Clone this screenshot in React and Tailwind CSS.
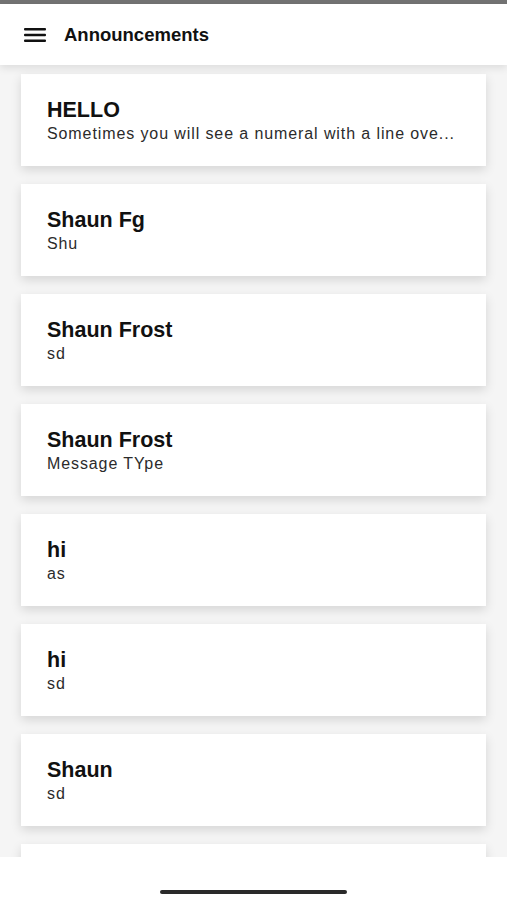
import { useState } from 'react';

const announcements = [
  { id: 1, title: 'HELLO', body: 'Sometimes you will see a numeral with a line ove...' },
  { id: 2, title: 'Shaun Fg', body: 'Shu' },
  { id: 3, title: 'Shaun Frost', body: 'sd' },
  { id: 4, title: 'Shaun Frost', body: 'Message TYpe' },
  { id: 5, title: 'hi', body: 'as' },
  { id: 6, title: 'hi', body: 'sd' },
  { id: 7, title: 'Shaun', body: 'sd' },
  { id: 8, title: 'Shaun', body: 'sd' },
];

const MenuIcon = () => (
  <svg width="22" height="14" viewBox="0 0 22 14" className="text-[#111]">
    <rect x="0" y="0" width="22" height="2.4" rx="1" fill="currentColor" />
    <rect x="0" y="5.8" width="22" height="2.4" rx="1" fill="currentColor" />
    <rect x="0" y="11.6" width="22" height="2.4" rx="1" fill="currentColor" />
  </svg>
);

const AnnouncementCard = ({ item }) => (
  <div className="bg-white shadow-[0_4px_10px_rgba(0,0,0,0.13)] pt-6 pb-[22px] pl-[26px] pr-[30px] flex flex-col gap-[2px]">
    <h2 className="text-[21.5px] leading-6 font-bold text-[#111] truncate">{item.title}</h2>
    <p className="text-[16px] leading-5 tracking-[0.9px] text-[#2b2b2b] whitespace-nowrap overflow-hidden">{item.body}</p>
  </div>
);

const App = () => {
  const [items] = useState(announcements);

  return (
    <div className="h-[900px] w-full flex flex-col bg-white overflow-hidden" style={{ fontFamily: '"Liberation Sans", Arial, sans-serif' }}>
      <div className="h-1 bg-[#737373] shrink-0"></div>

      <header className="h-[61px] shrink-0 bg-white flex items-center gap-[18px] px-6 shadow-[0_3px_8px_rgba(0,0,0,0.1)] relative z-10">
        <MenuIcon />
        <h1 className="text-[18.5px] font-bold text-[#111]">Announcements</h1>
      </header>

      <main className="flex-1 overflow-hidden bg-[#f5f5f5]">
        <div className="flex flex-col gap-[18px] pt-[9px] px-[21px] pb-8">
          {items.map((item) => (
            <AnnouncementCard key={item.id} item={item} />
          ))}
        </div>
      </main>

      <div className="h-[43px] shrink-0 bg-white flex items-end justify-center pb-[6px]">
        <div className="w-[187px] h-1 rounded-full bg-[#2a2a2a]"></div>
      </div>
    </div>
  );
};

export default App;
